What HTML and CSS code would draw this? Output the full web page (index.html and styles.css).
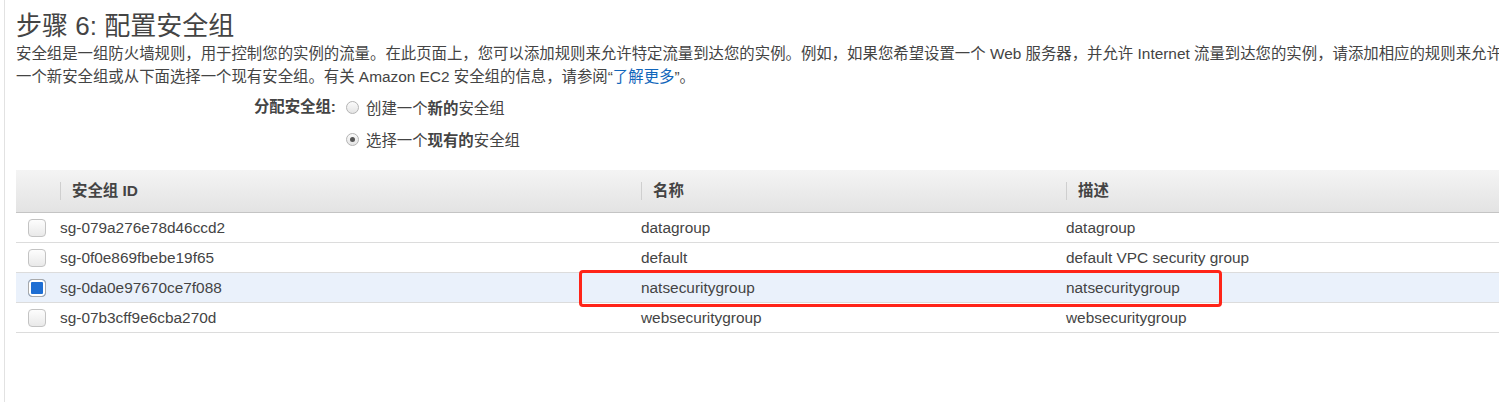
FILE: index.html
```html
<!DOCTYPE html>
<html lang="zh-CN">
<head>
<meta charset="utf-8">
<title>步骤 6: 配置安全组</title>
<link rel="stylesheet" href="styles.css">
</head>
<body>
<div class="page">
  <h1 class="title">步骤 6: 配置安全组</h1>
  <p class="desc">安全组是一组防火墙规则，用于控制您的实例的流量。在此页面上，您可以添加规则来允许特定流量到达您的实例。例如，如果您希望设置一个 Web 服务器，并允许 Internet 流量到达您的实例，请添加相应的规则来允许<br>一个新安全组或从下面选择一个现有安全组。有关 Amazon EC2 安全组的信息，请参阅“<a class="link" href="#">了解更多</a>”。</p>

  <div class="assign">
    <div class="assign-label">分配安全组:</div>
    <label class="option"><span class="radio"></span><span>创建一个<b>新的</b>安全组</span></label>
    <div></div>
    <label class="option"><span class="radio checked"></span><span>选择一个<b>现有的</b>安全组</span></label>
  </div>

  <div class="grid">
    <div class="row head">
      <div class="cell"></div>
      <div class="cell"><span class="hcell">安全组 ID</span></div>
      <div class="cell"><span class="hcell">名称</span></div>
      <div class="cell"><span class="hcell">描述</span></div>
    </div>
    <div class="row">
      <div class="cell"><span class="check"></span></div>
      <div class="cell">sg-079a276e78d46ccd2</div>
      <div class="cell">datagroup</div>
      <div class="cell">datagroup</div>
    </div>
    <div class="row">
      <div class="cell"><span class="check"></span></div>
      <div class="cell">sg-0f0e869fbebe19f65</div>
      <div class="cell">default</div>
      <div class="cell">default VPC security group</div>
    </div>
    <div class="row selected">
      <div class="cell"><span class="check on"></span></div>
      <div class="cell">sg-0da0e97670ce7f088</div>
      <div class="cell">natsecuritygroup</div>
      <div class="cell">natsecuritygroup</div>
    </div>
    <div class="row">
      <div class="cell"><span class="check"></span></div>
      <div class="cell">sg-07b3cff9e6cba270d</div>
      <div class="cell">websecuritygroup</div>
      <div class="cell">websecuritygroup</div>
    </div>
    <div class="highlight"></div>
  </div>
</div>
</body>
</html>
```

FILE: styles.css
```css
html, body {
  margin: 0;
  padding: 0;
  overflow: hidden;
  background: #fff;
}

body {
  font-family: "Liberation Sans", "Noto Sans CJK SC", sans-serif;
  color: #444;
  width: 1499px;
  height: 402px;
}

.page {
  margin-left: 4px;
  border-left: 1px solid #e2e2e2;
  padding: 12px 0 0 11px;
  height: 390px;
  width: 1640px;
}

.title {
  margin: 0;
  font-size: 26px;
  line-height: 29px;
  font-weight: normal;
  color: #444;
}

.desc {
  margin: 1px 0 0;
  font-size: 15.4px;
  line-height: 23px;
  white-space: nowrap;
  color: #444;
}

.link {
  color: #1166bb;
  text-decoration: none;
}

.assign {
  margin-top: 3px;
  display: grid;
  grid-template-columns: 320px auto;
  grid-auto-rows: 32px;
  column-gap: 10px;
  justify-content: start;
  font-size: 15.4px;
}

.assign-label {
  text-align: right;
  font-weight: bold;
  line-height: 32px;
  color: #444;
}

.option {
  display: flex;
  align-items: center;
  gap: 7px;
  color: #444;
}

.option b {
  font-weight: bold;
}

.radio {
  width: 11px;
  height: 11px;
  border-radius: 50%;
  border: 1px solid #b4b4b4;
  background: linear-gradient(#fbfbfb, #e4e4e4);
  display: flex;
  align-items: center;
  justify-content: center;
}

.radio.checked::after {
  content: "";
  width: 5px;
  height: 5px;
  border-radius: 50%;
  background: #555;
}

.grid {
  position: relative;
  margin-top: 15px;
  width: 1620px;
}

.row {
  display: grid;
  grid-template-columns: 44px 581px 425px 1fr;
  height: 29px;
  border-bottom: 1px solid #dcdcdc;
  font-size: 15.4px;
  line-height: 18px;
  color: #444;
}

.row.head {
  height: 42px;
  border-bottom: 1px solid #c4c4c4;
  background: linear-gradient(#f4f4f4, #e3e3e3);
  font-weight: bold;
}

.row.selected {
  background: #eaf1fb;
}

.cell {
  display: flex;
  align-items: center;
  white-space: nowrap;
}

.hcell {
  display: block;
  border-left: 1px solid #cfcfcf;
  padding-left: 11px;
  line-height: 18px;
  color: #444;
}

.check {
  margin-left: 12px;
  width: 16px;
  height: 16px;
  border: 1px solid #c3c3c3;
  border-radius: 4px;
  background: linear-gradient(#fdfdfd, #e9e9e9);
  box-sizing: content-box;
}

.check.on {
  border-color: #a9a9a9;
  background: #1e6ed3;
  box-shadow: inset 0 0 0 2px #fff;
}

.highlight {
  position: absolute;
  left: 563px;
  top: 100px;
  width: 637px;
  height: 31px;
  border: 3px solid #ff2418;
  border-radius: 4px;
}
```
